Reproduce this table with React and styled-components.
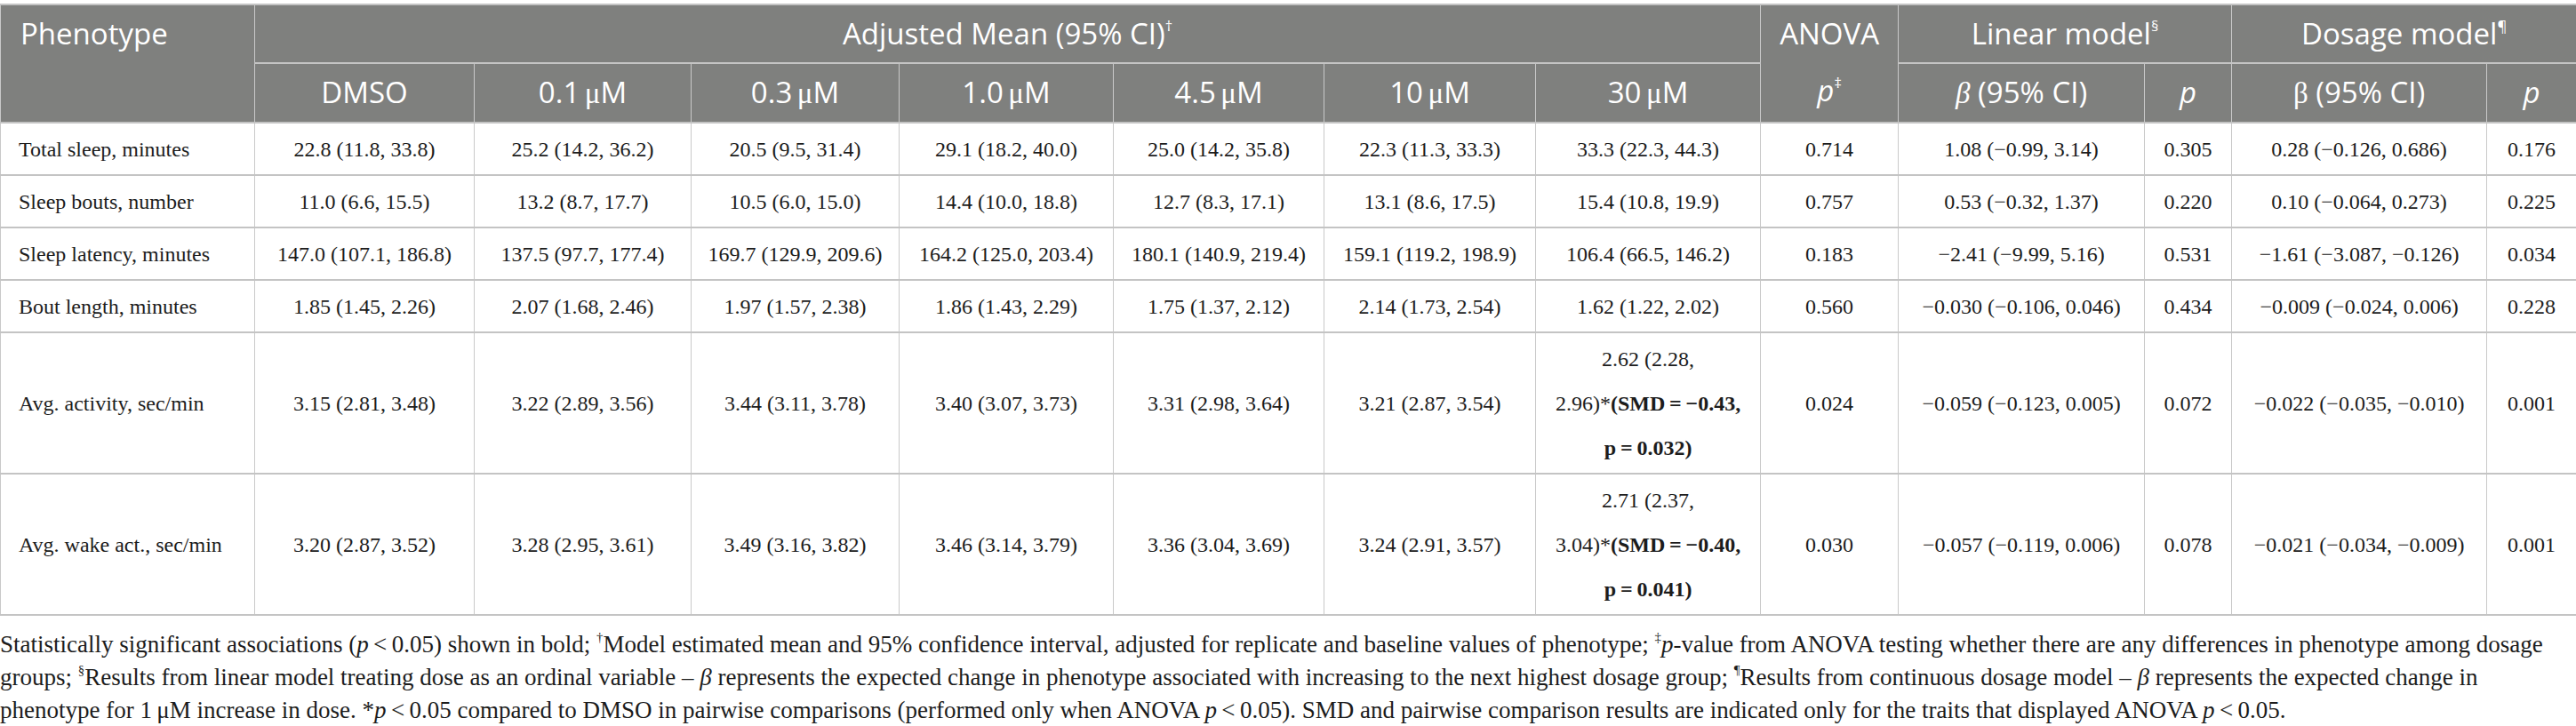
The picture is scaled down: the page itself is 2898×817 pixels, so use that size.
import React from "react";
import styled, { createGlobalStyle } from "styled-components";

const GlobalStyle = createGlobalStyle`
  html, body {
    margin: 0;
    padding: 0;
    background: #ffffff;
  }
  body {
    font-family: "Liberation Serif", "Times New Roman", serif;
    color: #1c1c1c;
  }
`;

const Page = styled.div`
  width: 2898px;
  padding-top: 4px;
`;

const Table = styled.table`
  width: 2898px;
  table-layout: fixed;
  border-collapse: collapse;
`;

const Col = styled.col`
  width: ${(p) => p.$w}px;
`;

const HeadCell = styled.th`
  background: #7f807e;
  color: #ffffff;
  font-family: "Open Sans", "Liberation Sans", sans-serif;
  font-weight: 400;
  font-size: 33px;
  line-height: 63.5px;
  padding: 0 ${(p) => (p.$left ? "22px" : "6px")};
  text-align: ${(p) => (p.$left ? "left" : "center")};
  vertical-align: top;
  white-space: nowrap;
  border: 1px solid #c9c9c9;
  border-top: 2px solid #c4c4c4;
  border-bottom: 2px solid #c4c4c4;

  sup {
    font-size: 0.5em;
    line-height: 0;
    vertical-align: 0.9em;
  }
  i {
    font-family: "Open Sans", sans-serif;
  }
`;

const Greek = styled.span`
  font-family: "Liberation Serif", serif;
  font-style: ${(p) => (p.$italic ? "italic" : "normal")};
`;

const Row = styled.tr``;

const Cell = styled.td`
  font-size: 24px;
  line-height: 50px;
  padding: 3.5px ${(p) => (p.$left ? "20px" : "6px")};
  text-align: ${(p) => (p.$left ? "left" : "center")};
  vertical-align: middle;
  white-space: nowrap;
  border-left: 1px solid #c9c9c9;
  border-right: 1px solid #c9c9c9;
  border-bottom: 2px solid #c4c4c4;
`;

const Strong = styled.b`
  font-weight: 700;
`;

const Notes = styled.p`
  margin: 14px 0 0;
  font-size: 27px;
  line-height: 37px;
  color: #1c1c1c;
  white-space: nowrap;

  sup {
    font-size: 0.55em;
    line-height: 0;
    vertical-align: 0.8em;
  }
`;

const widths = [286, 247, 244, 234, 241, 237, 238, 253, 155, 277, 98, 287, 101];

const doses = ["0.1", "0.3", "1.0", "4.5", "10", "30"];

const rows = [
  {
    name: "Total sleep, minutes",
    means: ["22.8 (11.8, 33.8)", "25.2 (14.2, 36.2)", "20.5 (9.5, 31.4)", "29.1 (18.2, 40.0)", "25.0 (14.2, 35.8)", "22.3 (11.3, 33.3)", "33.3 (22.3, 44.3)"],
    anova: "0.714",
    lin: "1.08 (−0.99, 3.14)",
    linP: "0.305",
    dose: "0.28 (−0.126, 0.686)",
    doseP: "0.176",
  },
  {
    name: "Sleep bouts, number",
    means: ["11.0 (6.6, 15.5)", "13.2 (8.7, 17.7)", "10.5 (6.0, 15.0)", "14.4 (10.0, 18.8)", "12.7 (8.3, 17.1)", "13.1 (8.6, 17.5)", "15.4 (10.8, 19.9)"],
    anova: "0.757",
    lin: "0.53 (−0.32, 1.37)",
    linP: "0.220",
    dose: "0.10 (−0.064, 0.273)",
    doseP: "0.225",
  },
  {
    name: "Sleep latency, minutes",
    means: ["147.0 (107.1, 186.8)", "137.5 (97.7, 177.4)", "169.7 (129.9, 209.6)", "164.2 (125.0, 203.4)", "180.1 (140.9, 219.4)", "159.1 (119.2, 198.9)", "106.4 (66.5, 146.2)"],
    anova: "0.183",
    lin: "−2.41 (−9.99, 5.16)",
    linP: "0.531",
    dose: "−1.61 (−3.087, −0.126)",
    doseP: "0.034",
  },
  {
    name: "Bout length, minutes",
    means: ["1.85 (1.45, 2.26)", "2.07 (1.68, 2.46)", "1.97 (1.57, 2.38)", "1.86 (1.43, 2.29)", "1.75 (1.37, 2.12)", "2.14 (1.73, 2.54)", "1.62 (1.22, 2.02)"],
    anova: "0.560",
    lin: "−0.030 (−0.106, 0.046)",
    linP: "0.434",
    dose: "−0.009 (−0.024, 0.006)",
    doseP: "0.228",
  },
  {
    name: "Avg. activity, sec/min",
    means: ["3.15 (2.81, 3.48)", "3.22 (2.89, 3.56)", "3.44 (3.11, 3.78)", "3.40 (3.07, 3.73)", "3.31 (2.98, 3.64)", "3.21 (2.87, 3.54)"],
    pair: { head: "2.62 (2.28,", tail: "2.96)*", smd: "−0.43,", p: "0.032)" },
    anova: "0.024",
    lin: "−0.059 (−0.123, 0.005)",
    linP: "0.072",
    dose: "−0.022 (−0.035, −0.010)",
    doseP: "0.001",
  },
  {
    name: "Avg. wake act., sec/min",
    means: ["3.20 (2.87, 3.52)", "3.28 (2.95, 3.61)", "3.49 (3.16, 3.82)", "3.46 (3.14, 3.79)", "3.36 (3.04, 3.69)", "3.24 (2.91, 3.57)"],
    pair: { head: "2.71 (2.37,", tail: "3.04)*", smd: "−0.40,", p: "0.041)" },
    anova: "0.030",
    lin: "−0.057 (−0.119, 0.006)",
    linP: "0.078",
    dose: "−0.021 (−0.034, −0.009)",
    doseP: "0.001",
  },
];

const PairCell = ({ pair }) => (
  <Cell>
    {pair.head}
    <br />
    {pair.tail}
    <Strong>(SMD{"\u2009=\u2009"}{pair.smd}</Strong>
    <br />
    <Strong>p{"\u2009=\u2009"}{pair.p}</Strong>
  </Cell>
);

const App = () => {
  return (
    <>
      <GlobalStyle />
      <Page>
        <Table>
          <colgroup>
            {widths.map((w, i) => (
              <Col key={i} $w={w} />
            ))}
          </colgroup>
          <thead>
            <tr>
              <HeadCell rowSpan={2} $left>
                Phenotype
              </HeadCell>
              <HeadCell colSpan={7}>
                Adjusted Mean (95% CI)<sup>†</sup>
              </HeadCell>
              <HeadCell rowSpan={2}>
                ANOVA
                <br />
                <i>p</i>
                <sup>‡</sup>
              </HeadCell>
              <HeadCell colSpan={2}>
                Linear model<sup>§</sup>
              </HeadCell>
              <HeadCell colSpan={2}>
                Dosage model<sup>¶</sup>
              </HeadCell>
            </tr>
            <tr>
              <HeadCell>DMSO</HeadCell>
              {doses.map((d) => (
                <HeadCell key={d}>
                  {d}
                  {"\u2009"}
                  <Greek>μ</Greek>M
                </HeadCell>
              ))}
              <HeadCell>
                <Greek $italic>β</Greek> (95% CI)
              </HeadCell>
              <HeadCell>
                <i>p</i>
              </HeadCell>
              <HeadCell>
                <Greek>β</Greek> (95% CI)
              </HeadCell>
              <HeadCell>
                <i>p</i>
              </HeadCell>
            </tr>
          </thead>
          <tbody>
            {rows.map((r) => (
              <Row key={r.name}>
                <Cell $left>{r.name}</Cell>
                {r.means.map((m, i) => (
                  <Cell key={i}>{m}</Cell>
                ))}
                {r.pair && <PairCell pair={r.pair} />}
                <Cell>{r.anova}</Cell>
                <Cell>{r.lin}</Cell>
                <Cell>{r.linP}</Cell>
                <Cell>{r.dose}</Cell>
                <Cell>{r.doseP}</Cell>
              </Row>
            ))}
          </tbody>
        </Table>
        <Notes>
          Statistically significant associations (<i>p</i>{"\u2009<\u2009"}0.05) shown in bold; <sup>†</sup>Model
          estimated mean and 95% confidence interval, adjusted for replicate and baseline values of phenotype;{" "}
          <sup>‡</sup>
          <i>p</i>-value from ANOVA testing whether there are any differences in phenotype among dosage
          <br />
          groups; <sup>§</sup>Results from linear model treating dose as an ordinal variable – <i>β</i> represents
          the expected change in phenotype associated with increasing to the next highest dosage group;{" "}
          <sup>¶</sup>Results from continuous dosage model – <i>β</i> represents the expected change in
          <br />
          phenotype for 1{"\u2009"}μM increase in dose. *<i>p</i>{"\u2009<\u2009"}0.05 compared to DMSO in pairwise
          comparisons (performed only when ANOVA <i>p</i>{"\u2009<\u2009"}0.05). SMD and pairwise comparison results
          are indicated only for the traits that displayed ANOVA <i>p</i>{"\u2009<\u2009"}0.05.
        </Notes>
      </Page>
    </>
  );
};

export default App;
